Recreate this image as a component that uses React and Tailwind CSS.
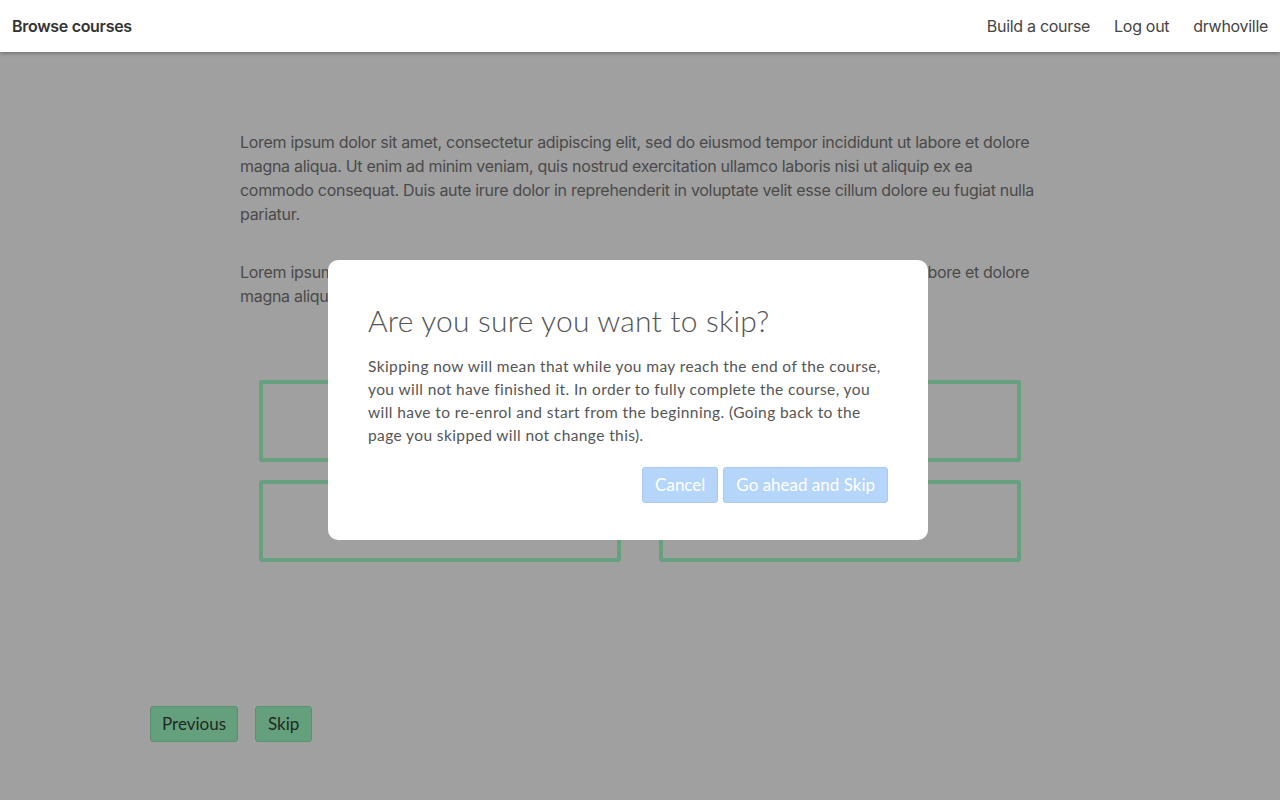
const avenir = { fontFamily: '"Lato", "Noto Sans", sans-serif' };

/* ------------------ PAGE CONTENT ------------------ */

const LOREM =
  'Lorem ipsum dolor sit amet, consectetur adipiscing elit, sed do eiusmod tempor incididunt ut labore et dolore magna aliqua. Ut enim ad minim veniam, quis nostrud exercitation ullamco laboris nisi ut aliquip ex ea commodo consequat. Duis aute irure dolor in reprehenderit in voluptate velit esse cillum dolore eu fugiat nulla pariatur.';

const LOREM_SHORT =
  'Lorem ipsum dolor sit amet, consectetur adipiscing elit, sed do eiusmod tempor incididunt ut labore et dolore magna aliqua.';

function Navbar() {
  return (
    <header className="relative z-20 h-[52px] bg-white flex items-center justify-between px-3 shadow-[0_1px_4px_rgba(0,0,0,0.35)] font-['Inter',sans-serif] tracking-[-0.3px]">
      <a className="text-[16px] font-semibold text-[#333]">Browse courses</a>
      <nav className="flex items-center gap-6 text-[16px] text-[#444]">
        <a>Build a course</a>
        <a>Log out</a>
        <a>drwhoville</a>
      </nav>
    </header>
  );
}

function AnswerBox() {
  return <div className="h-[82px] border-4 border-[#66a07e] rounded-[3px]" />;
}

/* ------------------ MODAL ------------------ */

function SkipModal() {
  return (
    <div className="absolute left-[328px] top-[260px] w-[600px] bg-white rounded-[10px] px-10 pt-[40px] pb-[37px] text-[#555]" style={avenir}>
      <h2 className="text-[30px] font-light leading-[40px] tracking-[0.2px]">Are you sure you want to skip?</h2>
      <p className="mt-[15px] text-[15.5px] leading-[23px] tracking-[0.4px] text-[#555]">
        Skipping now will mean that while you may reach the end of the course, you will not have finished it. In order to fully complete the course, you will have to re-enrol and start from the beginning. (Going back to the page you skipped will not change this).
      </p>
      <div className="mt-[20px] flex justify-end gap-[5px]">
        <button className="h-[36px] px-3 rounded-[3px] bg-[#b6d5fb] border border-[#a9c9f0] text-white text-[17px]">
          Cancel
        </button>
        <button className="h-[36px] px-3 rounded-[3px] bg-[#b6d5fb] border border-[#a9c9f0] text-white text-[17px]">
          Go ahead and Skip
        </button>
      </div>
    </div>
  );
}

export default function App() {
  return (
    <div className="relative w-[1280px] h-[800px] overflow-hidden bg-[#a0a0a0]">
      <Navbar />

      {/* dimmed page body */}
      <main className="font-['Inter',sans-serif]">
        <div className="w-[800px] mx-auto pt-[78px] text-[16px] leading-[24px] tracking-[-0.3px] text-[#4a4a4a]">
          <p>{LOREM}</p>
          <p className="mt-[34px]">{LOREM_SHORT}</p>
        </div>

        <div className="w-[762px] mx-auto mt-[72px] grid grid-cols-2 gap-x-[38px] gap-y-[18px]">
          <AnswerBox />
          <AnswerBox />
          <AnswerBox />
          <AnswerBox />
        </div>

        <div className="mt-[144px] ml-[150px] flex gap-[17px]" style={avenir}>
          <button className="h-[36px] px-[11px] rounded-[3px] bg-[#65a07c] border border-[#5a9171] text-[#1f2a23] text-[17px]">
            Previous
          </button>
          <button className="h-[36px] px-3 rounded-[3px] bg-[#65a07c] border border-[#5a9171] text-[#1f2a23] text-[17px]">
            Skip
          </button>
        </div>
      </main>

      <SkipModal />
    </div>
  );
}
